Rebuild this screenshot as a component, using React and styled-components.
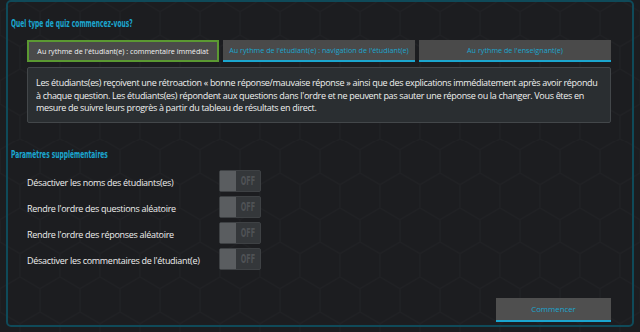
import React from "react";
import styled, { createGlobalStyle } from "styled-components";

const hexTile = encodeURIComponent(
  '<svg xmlns="http://www.w3.org/2000/svg" width="30" height="51.96" viewBox="0 0 30 51.96"><path d="M0 8.66L15 0L30 8.66M0 8.66V25.98M30 8.66V25.98M0 25.98L15 34.64L30 25.98M15 34.64V51.96" fill="none" stroke="#202124" stroke-width="1"/></svg>'
);

const GlobalStyle = createGlobalStyle`
  html, body {
    margin: 0;
    padding: 0;
    background: #1c1d20;
  }
  body {
    font-family: "Open Sans", "Liberation Sans", sans-serif;
  }
`;

const cyan = "#1ba6cf";

const Page = styled.div`
  width: 640px;
  height: 332px;
  box-sizing: border-box;
  padding: 0 6px 5px 6px;
  background-color: #1c1d20;
  background-image: url("data:image/svg+xml,${hexTile}");
  background-size: 40px 69.28px;
`;

const Panel = styled.div`
  height: 100%;
  box-sizing: border-box;
  border: 2px solid #0f4a59;
  border-radius: 5px;
  padding: 15px 21px 3px 3px;
  display: flex;
  flex-direction: column;
`;

const Heading = styled.h2`
  margin: 0;
  font-family: "DejaVu Sans Condensed", "DejaVu Sans", sans-serif;
  font-weight: bold;
  font-size: 11px;
  line-height: 14px;
  color: ${cyan};
  transform: scaleX(0.6);
  transform-origin: left center;
  white-space: nowrap;
`;

const Indent = styled.div`
  padding-left: 16px;
`;

const Tabs = styled.div`
  display: grid;
  grid-template-columns: repeat(3, 1fr);
  gap: 4px;
  margin-top: 9px;
`;

const Tab = styled.button`
  height: 22px;
  box-sizing: border-box;
  background: #4a4a4a;
  border: none;
  border-bottom: 2px solid ${cyan};
  color: ${cyan};
  font-family: "Open Sans", sans-serif;
  font-size: 7.2px;
  padding: 0;

  ${(p) =>
    p.$active &&
    `
    border: 2px solid #5b9932;
    color: #f2f2f2;
  `}
`;

const Description = styled.div`
  margin-top: 5px;
  background: #2a2e31;
  border: 1px solid #43474a;
  border-radius: 2px;
  padding: 9px 9px 7px 8px;
  color: #f0f0f0;
  font-size: 9px;
  line-height: 12.5px;
  letter-spacing: -0.32px;
`;

const SectionTitle = styled(Heading)`
  margin-top: 25px;
`;

const Options = styled.div`
  margin-top: 8px;
  display: flex;
  flex-direction: column;
  gap: 4px;
`;

const OptionRow = styled.div`
  display: grid;
  grid-template-columns: 192px 42px;
  align-items: center;
  height: 22px;
`;

const Label = styled.span`
  color: #eeeeee;
  font-size: 9px;
  letter-spacing: -0.3px;
  padding-top: 4px;
`;

const Toggle = styled.div`
  width: 42px;
  height: 22px;
  box-sizing: border-box;
  border: 1px solid #3e4144;
  border-radius: 2px;
  background: #34373a;
  display: flex;
`;

const Knob = styled.span`
  width: 16px;
  background: #5a5d60;
`;

const ToggleText = styled.span`
  flex: 1;
  display: flex;
  align-items: center;
  justify-content: center;
  font-family: "DejaVu Sans Condensed", "DejaVu Sans", sans-serif;
  font-weight: bold;
  font-size: 12px;
  color: #4f5255;
  transform: scaleX(0.6);
`;

const Footer = styled.div`
  margin-top: auto;
  display: flex;
  justify-content: flex-end;
`;

const StartButton = styled.button`
  width: 115px;
  height: 24px;
  box-sizing: border-box;
  background: #4f4f4f;
  border: none;
  border-bottom: 2px solid ${cyan};
  color: ${cyan};
  font-family: "Open Sans", sans-serif;
  font-size: 7.8px;
  padding: 0;
`;

const options = [
  "Désactiver les noms des étudiants(es)",
  "Rendre l'ordre des questions aléatoire",
  "Rendre l'ordre des réponses aléatoire",
  "Désactiver les commentaires de l'étudiant(e)",
];

export default function App() {
  return (
    <Page>
      <GlobalStyle />
      <Panel>
        <Heading>Quel type de quiz commencez-vous?</Heading>
        <Indent>
          <Tabs>
            <Tab $active>Au rythme de l'étudiant(e) : commentaire immédiat</Tab>
            <Tab>Au rythme de l'étudiant(e) : navigation de l'étudiant(e)</Tab>
            <Tab>Au rythme de l'enseignant(e)</Tab>
          </Tabs>
          <Description>
            Les étudiants(es) reçoivent une rétroaction « bonne réponse/mauvaise réponse » ainsi que des
            explications immédiatement après avoir répondu à chaque question. Les étudiants(es) répondent aux
            questions dans l'ordre et ne peuvent pas sauter une réponse ou la changer. Vous êtes en mesure de
            suivre leurs progrès à partir du tableau de résultats en direct.
          </Description>
        </Indent>
        <SectionTitle>Paramètres supplémentaires</SectionTitle>
        <Indent>
          <Options>
            {options.map((o) => (
              <OptionRow key={o}>
                <Label>{o}</Label>
                <Toggle>
                  <Knob />
                  <ToggleText>OFF</ToggleText>
                </Toggle>
              </OptionRow>
            ))}
          </Options>
        </Indent>
        <Footer>
          <StartButton>Commencer</StartButton>
        </Footer>
      </Panel>
    </Page>
  );
}
